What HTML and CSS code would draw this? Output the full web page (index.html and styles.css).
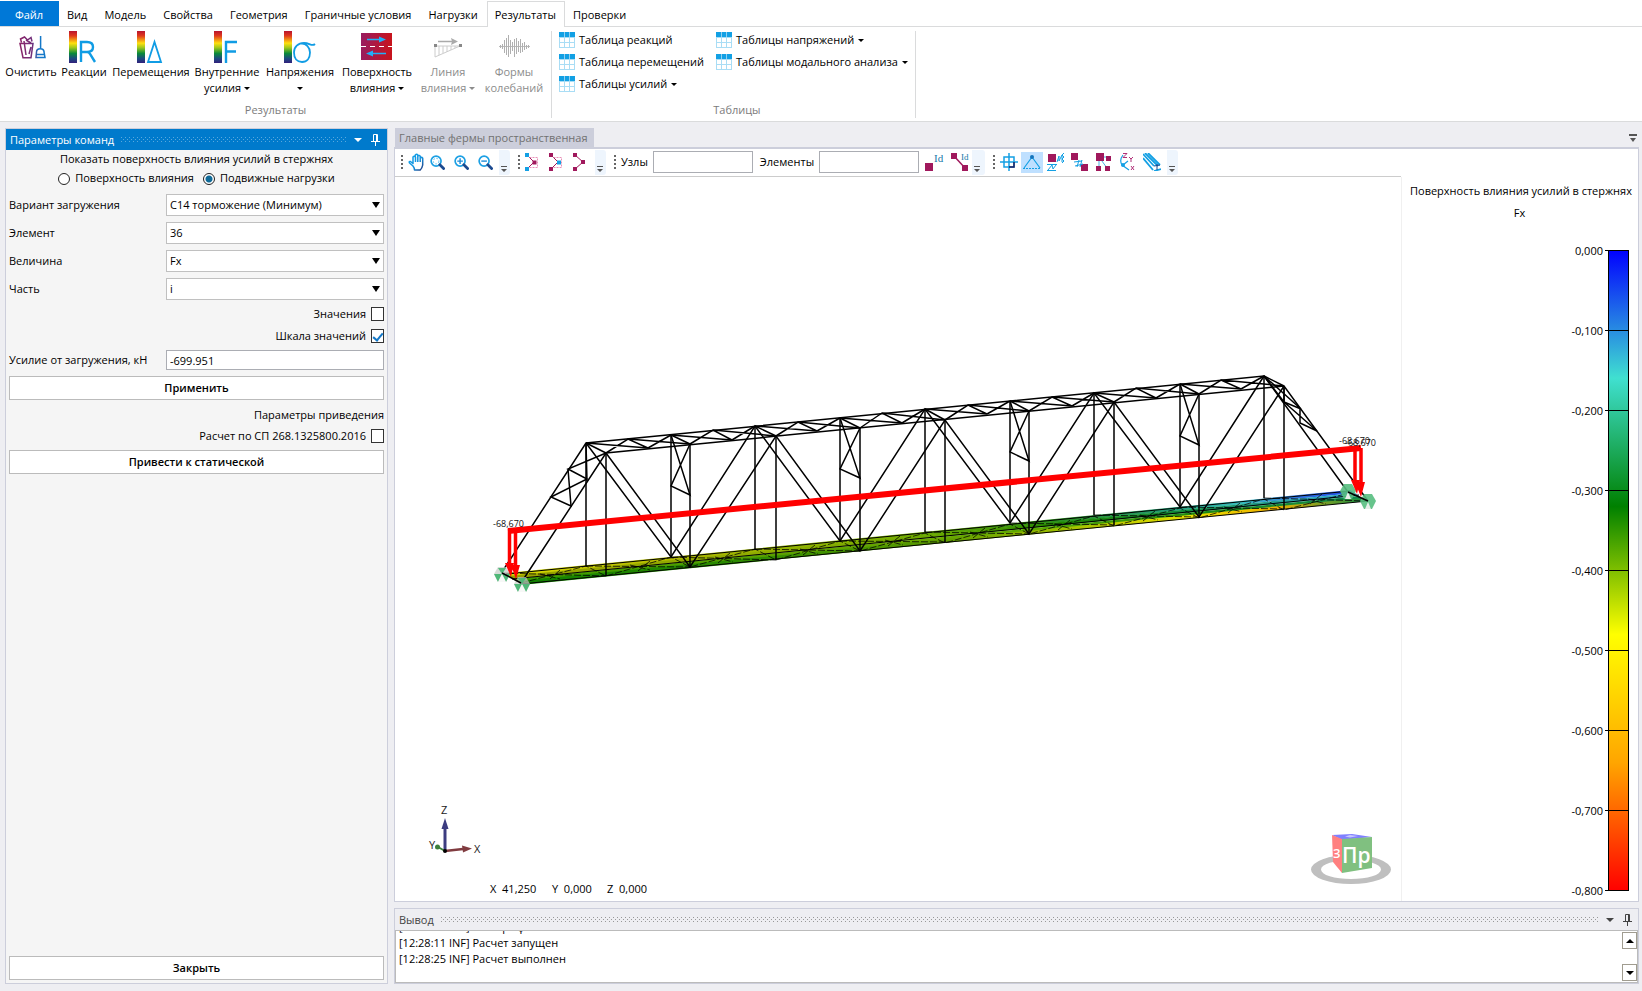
FILE: index.html
```html
<!DOCTYPE html>
<html lang="ru">
<head>
<meta charset="utf-8">
<title>Главные фермы пространственная</title>
<link rel="stylesheet" href="styles.css">
</head>
<body>
<svg class="defs" width="0" height="0" aria-hidden="true">
  <defs>
    <linearGradient id="spectrum" x1="0" y1="0" x2="0" y2="1">
      <stop offset="0" stop-color="#b81430"/><stop offset=".15" stop-color="#e03a1c"/><stop offset=".38" stop-color="#ffe010"/><stop offset=".52" stop-color="#a0c81c"/><stop offset=".7" stop-color="#0a8a3a"/><stop offset=".86" stop-color="#1c4a80"/><stop offset="1" stop-color="#32207c"/>
    </linearGradient>
    <linearGradient id="clean" gradientUnits="userSpaceOnUse" x1="5" y1="0" x2="30" y2="0">
      <stop offset="0" stop-color="#8a2468"/><stop offset=".5" stop-color="#70307c"/><stop offset=".75" stop-color="#1478c8"/>
    </linearGradient>
    <linearGradient id="surface" x1="0" y1="0" x2="1" y2="0">
      <stop offset="0" stop-color="#981c60"/><stop offset="1" stop-color="#c8141c"/>
    </linearGradient>
    <linearGradient id="blue" x1="0" y1="0" x2="1" y2="1">
      <stop offset="0" stop-color="#14a8ee"/><stop offset=".6" stop-color="#1490dc"/><stop offset="1" stop-color="#24387c"/>
    </linearGradient>
    <pattern id="dots-light" width="4" height="4" patternUnits="userSpaceOnUse"><path d="M0 0h1v1H0zM2 2h1v1H2z" fill="#59a8de"/></pattern>
    <pattern id="dots-dark" width="4" height="4" patternUnits="userSpaceOnUse"><path d="M0 0h1v1H0zM2 2h1v1H2z" fill="#999"/></pattern>
    <symbol id="table" viewBox="0 0 16 16">
      <path fill="#a9ddf5" d="M0 5h16v11H0z"/><path fill="#12a0e4" d="M0 0h16v5H0z"/>
      <path fill="#fff" d="M1 6h4v4H1zM6 6h4v4H6zM11 6h4v4h-4zM1 11h4v4H1zM6 11h4v4H6zM11 11h4v4h-4z"/>
      <path stroke="#8fd0f2" d="M5.500 0v5M10.500 0v5"/>
    </symbol>
    <symbol id="pin" viewBox="0 0 9 12"><path d="M2.500 7V.5h4V7M0 7.500h9M4.500 8v4M5.500 1v6" fill="none" stroke="currentColor"/></symbol>
    <symbol id="overflow" viewBox="0 0 8 6"><path d="M1 0h6v1H1zM1 3h6L4 6z" fill="#555"/></symbol>
    <symbol id="support-a" viewBox="0 0 16 15">
      <path d="M4 0h8l4 7-4 8H4L0 7z" fill="#c4ccc6" opacity=".7"/>
      <path d="M4 1h8L8 7zM0 7h8l-4 8zM8 7h8l-4 8z" fill="#4fb878"/><path d="m8 7 4 8H4z" fill="#fff" opacity=".8"/>
    </symbol>
    <symbol id="support-b" viewBox="0 0 16 15">
      <path d="M4 0h8l4 7-4 8H4L0 7z" fill="#57be80" opacity=".9"/>
      <path d="m8 8 3 7H5z" fill="#e8eeea"/>
    </symbol>
    <symbol id="lens" viewBox="0 0 16 16"><circle cx="6.500" cy="6.500" r="5.300" fill="none" stroke="#1ca0e4" stroke-width="1.800"/><path d="m10.500 10.500 4 4" stroke="#1c4a90" stroke-width="3" stroke-linecap="round"/></symbol>
  </defs>
</svg>

<header class="ribbon">
  <nav class="tabs">
    <button class="tab file">Файл</button><button class="tab">Вид</button><button class="tab">Модель</button><button class="tab">Свойства</button><button class="tab">Геометрия</button><button class="tab">Граничные условия</button><button class="tab">Нагрузки</button><button class="tab active">Результаты</button><button class="tab">Проверки</button>
  </nav>
  <div class="groups">
    <section class="group">
      <div class="commands">
        <button class="big c-clean"><svg width="32" height="32" viewBox="0 0 32 32" fill="none" stroke="url(#clean)" stroke-width="1.500"><path d="M5 12.500h13l-2 14.200H8zM6.500 11.500l-1-3.500 4-2 3 3 3.500-2.500 1 4M9 10l2 14M16 16l-2 7M11 9l5 3"/><path d="M25.600 5v12M21.500 21c0-4.500 7.500-4.500 7.500 0l1 5.500h-9zM21 23.500h9"/></svg><span>Очистить</span></button>
        <button class="big c-react"><svg width="32" height="32" viewBox="0 0 32 32"><path d="M1 0h8v32H1z" fill="url(#spectrum)"/><path d="M13 31V11h6q6 0 6 5t-6 5h-6m6 0q2 0 3 2l5 8" fill="none" stroke="#109ce4" stroke-width="2.400"/></svg><span>Реакции</span></button>
        <button class="big c-move"><svg width="32" height="32" viewBox="0 0 32 32"><path d="M2 0h8v32H2z" fill="url(#spectrum)"/><path d="M13 31 19.500 11 26 31z" fill="none" stroke="#109ce4" stroke-width="1.800"/></svg><span>Перемещения</span></button>
        <button class="big c-force"><svg width="32" height="32" viewBox="0 0 32 32"><path d="M3 0h8v32H3z" fill="url(#spectrum)"/><path d="M15 32V11h11M15 20.500h10" fill="none" stroke="#109ce4" stroke-width="2.400"/></svg><span>Внутренние<br>усилия <i class="caret"></i></span></button>
        <button class="big c-stress"><svg width="32" height="32" viewBox="0 0 32 32"><path d="M0 0h8v32H0z" fill="url(#spectrum)"/><path d="M31 13c-3 3-5-1-11-1-6 0-10 4-10 9.500 0 6 3 9.500 8 9.500s8-4 8-9.500c0-5-4-9-8-9" fill="none" stroke="#109ce4" stroke-width="1.800"/></svg><span>Напряжения<br><i class="caret"></i></span></button>
        <button class="big c-surf"><svg width="32" height="32" viewBox="0 0 32 32"><path d="M0 2h31v27H0z" fill="url(#surface)"/><path d="M0 15.500h31" stroke="#fff" stroke-dasharray="5 4"/><path d="M6 8.500h14M10 22.500h15" stroke="#20b0f8" stroke-width="1.500"/><path d="m18 5.500 7 3-7 3zM12 19.500l-7 3 7 3z" fill="#20b0f8"/></svg><span>Поверхность<br>влияния <i class="caret"></i></span></button>
        <button class="big c-line" disabled><svg width="32" height="32" viewBox="0 0 32 32" fill="none" stroke="#ccc"><path d="M3 15v11l25-11zM7 15v9M11 15v7M15 15v6M19 15v4M23 15v2"/><path d="M6 10.500h16" stroke="#aaa" stroke-width="1.500"/><path d="m19 7 7 3.500-7 3.500 1-3.500z" fill="#aaa" stroke="none"/><path d="M2 13h3v3H2zM27 13h3v3h-3z" fill="#888" stroke="none"/></svg><span>Линия<br>влияния <i class="caret"></i></span></button>
        <button class="big c-form" disabled><svg width="32" height="32" viewBox="0 0 32 32"><path d="M1 15.500h31" stroke="#bbb"/><path d="M2.500 14v3M4.500 13v5M6.500 9v13M8.500 7v17M10.500 4v22M12.500 9v14M14.500 11v9M16.500 8v18M18.500 7v16M20.500 10v11M22.500 8v14M24.500 12v9M26.500 11v8M28.500 14v4M30.500 14v3" stroke="#b0b0b0"/></svg><span>Формы<br>колебаний</span></button>
      </div>
      <div class="caption">Результаты</div>
    </section>
    <section class="group tables">
      <div class="links">
        <button><svg width="16" height="16"><use href="#table"/></svg>Таблица реакций</button>
        <button><svg width="16" height="16"><use href="#table"/></svg>Таблица перемещений</button>
        <button><svg width="16" height="16"><use href="#table"/></svg>Таблицы усилий <i class="caret"></i></button>
        <button><svg width="16" height="16"><use href="#table"/></svg>Таблицы напряжений <i class="caret"></i></button>
        <button><svg width="16" height="16"><use href="#table"/></svg>Таблицы модального анализа <i class="caret"></i></button>
      </div>
      <div class="caption">Таблицы</div>
    </section>
  </div>
</header>

<div class="workspace">
  <aside class="panel">
    <div class="panel-head"><h2>Параметры команд</h2><svg class="dots" height="5"><rect width="100%" height="5" fill="url(#dots-light)"/></svg><i class="caret wide"></i><svg width="9" height="12"><use href="#pin"/></svg></div>
    <form class="params">
      <div class="intro">Показать поверхность влияния усилий в стержнях</div>
      <div class="radios">
        <label><input type="radio" name="mode"><span>Поверхность влияния</span></label>
        <label><input type="radio" name="mode" checked><span>Подвижные нагрузки</span></label>
      </div>
      <div class="field"><label for="f1">Вариант загружения</label><div class="combo"><select id="f1"><option>C14 торможение (Минимум)</option></select></div></div>
      <div class="field"><label for="f2">Элемент</label><div class="combo"><select id="f2"><option>36</option></select></div></div>
      <div class="field"><label for="f3">Величина</label><div class="combo"><select id="f3"><option>Fx</option></select></div></div>
      <div class="field"><label for="f4">Часть</label><div class="combo"><select id="f4"><option>i</option></select></div></div>
      <label class="check"><span>Значения</span><input type="checkbox"></label>
      <label class="check"><span>Шкала значений</span><input type="checkbox" checked></label>
      <div class="field force"><label for="f5">Усилие от загружения, кН</label><input id="f5" type="text" value="-699.951"></div>
      <button type="button" class="action">Применить</button>
      <div class="right">Параметры приведения</div>
      <label class="check last"><span>Расчет по СП 268.1325800.2016</span><input type="checkbox"></label>
      <button type="button" class="action second">Привести к статической</button>
      <button type="button" class="action close">Закрыть</button>
    </form>
  </aside>

  <main class="main">
    <div class="doc-tabs"><button class="doc-tab">Главные фермы пространственная</button><svg class="doc-menu" width="8" height="8"><path d="M0 0h8v2H0zM1 4h6L4 8z" fill="#555"/></svg></div>
    <section class="document">
      <div class="view">
        <div class="toolbar">
          <i class="grip"></i>
          <button class="tool" aria-label="Сдвиг"><svg width="18" height="18" viewBox="0 0 18 18" fill="#fff" stroke="url(#blue)" stroke-width="1.500" stroke-linejoin="round"><path d="M5 13 1.500 10q-1-2 1-1.500L5 10.500V4q1.200-1.500 2.300 0V2q1.400-1.500 2.500 0v1q1.400-1.300 2.500.3v1.500q1.400-1 2.400.4V12q-.5 3-2.500 5H6.500q0-2-1.500-4zM7.500 4v5M9.800 3v6M12.200 4v5"/></svg></button>
          <button class="tool g4" aria-label="Показать всё"><svg width="15" height="15" viewBox="0 0 16 16"><use href="#lens" width="16" height="16"/><circle cx="6.500" cy="6.500" r="3" fill="none" stroke="#5cc0ee" stroke-dasharray="2 1.500"/></svg></button>
          <button class="tool g9" aria-label="Увеличить"><svg width="15" height="15" viewBox="0 0 16 16"><use href="#lens" width="16" height="16"/><path d="M3.500 6.500h6M6.500 3.500v6" stroke="#1c8cd8" stroke-width="1.500"/></svg></button>
          <button class="tool g9" aria-label="Уменьшить"><svg width="15" height="15" viewBox="0 0 16 16"><use href="#lens" width="16" height="16"/><path d="M3.500 6.500h6" stroke="#1c8cd8" stroke-width="1.500"/></svg></button>
          <span class="over"><svg width="8" height="6"><use href="#overflow"/></svg></span>
          <i class="grip"></i>
          <button class="tool" aria-label="Выбор узлов"><svg width="16" height="18" viewBox="0 0 16 18"><path d="M2 2l7 7-7 7" fill="none" stroke="#a0185c"/><path d="M4.500 4.500h8v10h-8" fill="none" stroke="#e890b8" stroke-dasharray="2 1"/><path d="M0 0h4v4H0zM0 14h4v4H0z" fill="#14a0e4"/><path d="M7.500 7.500h4v4h-4z" fill="#a0185c"/></svg></button>
          <button class="tool g8" aria-label="Выбор элементов"><svg width="16" height="18" viewBox="0 0 16 18"><path d="M2 2l7 7-7 7" fill="none" stroke="#a0185c"/><path d="M4.500 4.500h8v10h-8" fill="none" stroke="#e890b8" stroke-dasharray="2 1"/><path d="M0 0h4v4H0zM0 14h4v4H0z" fill="#a0185c"/><path d="M8 7.500h4v4H8z" fill="#14a0e4"/></svg></button>
          <button class="tool g8" aria-label="Снять выбор"><svg width="16" height="18" viewBox="0 0 16 18"><path d="M2 2l8 7-8 7" fill="none" stroke="#a0185c"/><path d="M0 0h4v4H0zM0 14h4v4H0zM8 7h4v4H8z" fill="#a0185c"/></svg></button>
          <span class="over"><svg width="8" height="6"><use href="#overflow"/></svg></span>
          <i class="grip"></i>
          <label class="find">Узлы<input type="text"></label>
          <label class="find second">Элементы<input type="text"></label>
          <button class="tool" aria-label="Номера узлов"><svg width="20" height="18" viewBox="0 0 20 18"><path d="M0 10h8v8H0z" fill="#a0185c"/><text x="9" y="9" class="id">Id</text></svg></button>
          <button class="tool g6" aria-label="Номера элементов"><svg width="18" height="18" viewBox="0 0 18 18"><path d="m3 3 11 12" stroke="#a0185c" stroke-width="1.500"/><path d="M0 0h6v6H0zM11 12h6v6h-6z" fill="#a0185c"/><text x="10" y="7" class="id small">Id</text></svg></button>
          <span class="over tight"><svg width="8" height="6"><use href="#overflow"/></svg></span>
          <i class="grip"></i>
          <button class="tool" aria-label="Узлы"><svg width="18" height="18" viewBox="0 0 18 18"><path d="M9 0v18M0 9h18M4 4h10v10H4z" fill="none" stroke="#14a0e4" stroke-width="1.500"/><path d="M14 9v5H9" fill="none" stroke="#202060" stroke-width="1.500"/></svg></button>
          <button class="tool on" aria-label="Опоры"><svg width="18" height="18" viewBox="0 0 18 18"><path d="M9 4 1 15M9 4l8 11" stroke="#14a0e4" stroke-width="1.200"/><path d="M0 15.500h18" stroke="#14a0e4" stroke-dasharray="2 1"/><circle cx="9" cy="4" r="2" fill="#1474bc"/></svg></button>
          <button class="tool" aria-label="Связи"><svg width="18" height="18" viewBox="0 0 18 18"><path d="M1 1h8v8H1z" fill="#a0185c"/><path d="M10 9l2-6v5l3-6v7M17 0l-2 2 2 2-2 2 2 2-2 2M0 11.500h10M1 17l4-5 1 4 3-4M0 17.500h9" fill="none" stroke="#14a0e4"/></svg></button>
          <button class="tool g6" aria-label="Стержни"><svg width="18" height="18" viewBox="0 0 18 18"><path d="M0 0h7v7H0zM10 11h7v7h-7z" fill="#a0185c"/><path d="M3 9l8-1M4 13l8-2M8 7l-2 7M11 7l-2 7" stroke="#14a0e4"/></svg></button>
          <button class="tool g6" aria-label="Группы"><svg width="18" height="18" viewBox="0 0 18 18"><path d="M4 4h8M4 4v10M4 4l8 11" stroke="#4ab0e4"/><path d="M1 0h8v8H1zM11 3h5v5h-5zM1 13h5v5H1zM10 13h5v5h-5z" fill="#a0185c"/></svg></button>
          <button class="tool g6" aria-label="Оси"><svg width="18" height="18" viewBox="0 0 18 18"><path d="M4 2q-4 5-1 10l7 5M4 12l5-4" fill="none" stroke="#14a0e4" stroke-width="1.200"/><circle cx="4" cy="12" r="2" fill="#14a0e4"/><path d="M4 .5h4l-4 4h4M10 4l2 2 2-2M12 6v3M12 13l3 4M15 13l-3 4" fill="none" stroke="#b03078"/></svg></button>
          <button class="tool g6" aria-label="Сечения"><svg width="18" height="18" viewBox="0 0 18 18"><path d="m0 1 11 12M2 0l13 13M0 5l10 12M5 0l12 12M11 18l7-2" stroke="#14a0e4" stroke-width="1.800"/><path d="M14 11v6M11 13l6-1" stroke="#1c4a90"/></svg></button>
          <span class="over"><svg width="8" height="6"><use href="#overflow"/></svg></span>
        </div>

        <svg class="scene" viewBox="395 178 1006 724" preserveAspectRatio="xMidYMin meet">
          <defs>
            <linearGradient id="d1" gradientUnits="userSpaceOnUse" x1="510" y1="0" x2="1360" y2="0"><stop offset="0" stop-color="#d8d800"/><stop offset=".2" stop-color="#b0b800"/><stop offset=".45" stop-color="#7ab000"/><stop offset=".62" stop-color="#2f9010"/><stop offset=".78" stop-color="#229c78"/><stop offset=".86" stop-color="#38c0c0"/><stop offset=".93" stop-color="#2f70e0"/><stop offset="1" stop-color="#1a40e8"/></linearGradient>
            <linearGradient id="d2" gradientUnits="userSpaceOnUse" x1="510" y1="0" x2="1360" y2="0"><stop offset="0" stop-color="#98a000"/><stop offset=".3" stop-color="#90ac00"/><stop offset=".5" stop-color="#6aa800"/><stop offset=".65" stop-color="#1f8800"/><stop offset=".8" stop-color="#108a40"/><stop offset=".95" stop-color="#30a8c0"/></linearGradient>
            <linearGradient id="d3" gradientUnits="userSpaceOnUse" x1="510" y1="0" x2="1360" y2="0"><stop offset="0" stop-color="#3a9a00"/><stop offset=".3" stop-color="#5aa000"/><stop offset=".5" stop-color="#6aa800"/><stop offset=".62" stop-color="#5aa800"/><stop offset=".8" stop-color="#1f8a10"/><stop offset="1" stop-color="#108a50"/></linearGradient>
            <linearGradient id="d4" gradientUnits="userSpaceOnUse" x1="510" y1="0" x2="1360" y2="0"><stop offset="0" stop-color="#108000"/><stop offset=".25" stop-color="#2a8a00"/><stop offset=".5" stop-color="#5a9a00"/><stop offset=".65" stop-color="#a0c000"/><stop offset=".8" stop-color="#e8e000"/><stop offset=".9" stop-color="#f0b000"/><stop offset="1" stop-color="#209040"/></linearGradient>
          </defs>
          <g class="deck">
            <path d="M506 574 1350 491l5 3L509 578z" fill="url(#d1)"/>
            <path d="M509 577 1355 494l4 3L513 580z" fill="url(#d2)"/>
            <path d="M513 580 1359 497l4 3L517 583z" fill="url(#d3)"/>
            <path d="M517 582 1363 499l5 3L521 586z" fill="url(#d4)"/>
          </g>
          <path class="ribs" d="M506 575 1350 492M521 585 1368 502M512 580 1359 496"/>
          <path class="braces" d="M521 584l65-17 20 10 65-19 19 10 65-18 21 11 64-19 20 10 65-18 20 10 65-19 19 10 65-18 20 10 66-18 19 10 65-19 20 11 65-17M502 574l104 3M586 567l104 1M671 558l105 3M755 550l105 2M840 542l105 1M925 533l104 2M1010 524l104 2M1094 516l105 2M1180 508l104 2M1264 499l104 3M540 575l20 5M560 571l-10 9M630 566l20 5M650 562l-12 10M715 558l18 5M730 554l-12 10M800 550l18 5M815 546l-12 10M885 541l18 5M900 537l-12 10M970 533l18 5M985 529l-12 10M1054 525l18 5M1070 521l-12 10M1140 516l18 5M1155 512l-12 10M1224 508l18 5M1240 504l-12 10M1308 500l18 5M1322 495l-12 10"/>
          <g class="truss">
            <path d="M502 573 586 444 1264 377 1348 493M521 584 606 454 1284 387 1368 502"/>
            <path d="M586 444V567M671 436V558M755 427V550M840 419V542M925 410V533M1010 402V524M1094 394V516M1180 385V508M1264 377V499"/>
            <path d="M606 454V577M690 445V568M776 437V561M860 429V552M945 421V543M1029 412V535M1114 403V526M1199 395V518M1284 387V510"/>
            <path d="M586 444 671 558 755 427 840 542 925 410 1010 524 1094 394 1180 508 1264 377"/>
            <path d="M606 454 690 568 776 437 860 552 945 421 1029 535 1114 403 1199 518 1284 387"/>
            <path d="M586 444l20 10M671 436l19 9M755 427l21 10M840 419l20 10M925 410l20 11M1010 402l19 10M1094 394l20 9M1180 385l19 10M1264 377l20 10"/>
            <path d="M586 444 648 449 628 440 606 454M648 449 671 436M628 440 690 445M671 436 732 441 713 431 690 445M732 441 755 427M713 431 776 437M755 427 817 432 798 423 776 437M817 432 840 419M798 423 860 429M840 419 902 424 882 414 860 429M902 424 925 410M882 414 945 421M925 410 987 415 968 406 945 421M987 415 1010 402M968 406 1029 412M1010 402 1072 407 1052 398 1029 412M1072 407 1094 394M1052 398 1114 403M1094 394 1156 399 1136 389 1114 403M1156 399 1180 385M1136 389 1199 395M1180 385 1241 390 1221 381 1199 395M1241 390 1264 377M1221 381 1284 387"/>
            <path d="M671 436 690 496 671 487 690 445M840 419 860 479 840 470 860 429M1010 402 1029 462 1010 453 1029 412M1180 385 1199 446 1180 437 1199 395"/>
            <path d="M606 454 568 470 587 480 551 498 571 507 568 470M586 444 587 482M1264 377 1301 410 1284 403 1284 387M1300 410 1300 424 1317 432 1284 403M1264 377 1284 403"/>
          </g>
          <use href="#support-a" x="494" y="568" width="16" height="15"/><use href="#support-a" x="514" y="578" width="16" height="15"/>
          <use href="#support-b" x="1340" y="485" width="16" height="15"/><use href="#support-b" x="1360" y="495" width="16" height="15"/>
          <path d="m502 574 19 10M1348 493l20 9" stroke="#000" stroke-width="1.500"/>
          <g class="load">
            <path d="M508 532 1361 449" stroke-width="6"/>
            <path d="M509.500 530v38M515.500 533v38M1355 450v36M1361 449v38" stroke-width="3.500"/>
            <path d="M505 564h9l-3 14zM511 566h9l-4 14zM1351 481h9l-3 14zM1355 483h10l-4 15z" stroke="none" fill="#f00"/>
          </g>
          <g class="tags"><text x="493" y="528">-68,670</text><text x="1339" y="445">-68,670</text><text x="1345" y="447">-68,670</text></g>
          <g class="axes">
            <path d="M445 852V829" stroke="#3c3c80" stroke-width="3"/><path d="m441.500 830 3.500-11 3.500 11z" fill="#3c3c80"/>
            <path d="m445 852 18-2" stroke="#803c40" stroke-width="2.500"/><path d="m462 846.500 10 3-9 4z" fill="#803c40"/>
            <path d="m445 852-7-4" stroke="#3c803c" stroke-width="2"/><circle cx="437.500" cy="848" r="2.500" fill="#3c803c"/><circle cx="445" cy="852" r="2"/>
            <text x="441" y="815">Z</text><text x="429" y="850">Y</text><text x="474" y="854">X</text>
          </g>
          <g class="cube">
            <path fill="#bfbfbf" fill-rule="evenodd" d="M1311 870.500a40 14.500 0 0 1 80 0a40 14.500 0 0 1-80 0zM1321 870.500a30 9.500 0 0 0 60 0a30 9.500 0 0 0-60 0z"/>
            <path d="m1332 836 20-1 20 3-30 3z" fill="#8080ff"/><path d="m1332 836 10 4v34l-9-11z" fill="#ff8080"/><path d="m1342 840 30-2v31l-30 5z" fill="#80c080"/>
            <path d="m1345 837.500 5-1.500 8 1-8 1.500z" fill="#c8c8ff"/>
            <text x="1333" y="859" class="side">З</text><text x="1342" y="864" class="front">Пр</text>
          </g>
          <g class="coords"><text x="490" y="894">X&#160; 41,250</text><text x="552" y="894">Y&#160; 0,000</text><text x="607" y="894">Z&#160; 0,000</text></g>
        </svg>
      </div>
      <div class="legend">
        <h3>Поверхность влияния усилий в стержнях</h3>
        <div class="unit">Fx</div>
        <div class="scale">
          <ol><li>0,000</li><li>-0,100</li><li>-0,200</li><li>-0,300</li><li>-0,400</li><li>-0,500</li><li>-0,600</li><li>-0,700</li><li>-0,800</li></ol>
          <div class="bar"><i></i><i></i><i></i><i></i><i></i><i></i><i></i><i></i><i></i></div>
        </div>
      </div>
    </section>

    <section class="output">
      <div class="output-head"><h2>Вывод</h2><svg class="dots" height="5"><rect width="100%" height="5" fill="url(#dots-dark)"/></svg><i class="caret wide"></i><svg width="9" height="12"><use href="#pin"/></svg></div>
      <div class="log">
        <div class="lines"><p>[12:28:11 INF] Импорт файлов</p><p>[12:28:11 INF] Расчет запущен</p><p>[12:28:25 INF] Расчет выполнен</p></div>
        <div class="scroll"><button aria-label="Вверх"><i class="caret wide up"></i></button><button aria-label="Вниз"><i class="caret wide"></i></button></div>
      </div>
    </section>
  </main>
</div>
</body>
</html>
```
FILE: styles.css
```css
* { box-sizing: border-box; }
html, body { height: 100%; }
body {
  margin: 0;
  display: flex;
  flex-direction: column;
  background: #eeeef2;
  color: #000;
  font: 11px/16px "Open Sans", "Noto Sans", sans-serif;
  overflow: hidden;
}
button, input, select { font: inherit; color: inherit; margin: 0; }
button { border: 0; padding: 0; background: none; white-space: nowrap; }
h2, h3, p, ol { margin: 0; padding: 0; font: inherit; list-style: none; }
svg { display: block; flex: none; }
.defs { position: absolute; }

.caret {
  display: inline-block;
  border: solid transparent;
  border-width: 3px 3px 0;
  border-top-color: currentColor;
  vertical-align: 2px;
}
.caret.wide { border-width: 4px 4px 0; border-top-color: currentColor; }
.caret.up { transform: rotate(180deg); }

/* Ribbon */
.ribbon { background: #fff; border-bottom: 1px solid #dadbdc; }
.tabs { display: flex; height: 27px; padding-top: 1px; border-bottom: 1px solid #dadbdc; }
.tab { padding: 2px 9px 0 8px; height: 26px; }
.tab.file { width: 59px; height: 25px; background: #0078d7; color: #fff; }
.tab.active { border: 1px solid #dadbdc; border-bottom: 0; background: #fff; padding: 1px 8px 0 7px; }
.groups { display: flex; height: 94px; padding: 4px 0 3px; }
.group { display: flex; flex-direction: column; justify-content: space-between; border-right: 1px solid #dadbdc; }
.commands { display: flex; padding: 0 4px 0 3px; }
.big { display: flex; flex-direction: column; align-items: center; gap: 1px; }
.big:disabled { color: #8c8c8c; }
.c-clean { width: 56px; }
.c-react { width: 50px; }
.c-move { width: 84px; }
.c-force { width: 68px; }
.c-stress { width: 78px; }
.c-surf { width: 76px; }
.c-line { width: 66px; }
.c-form { width: 66px; }
.caption { color: #7c7c7c; text-align: center; }
.tables { padding-left: 7px; }
.links {
  display: grid;
  grid-template-rows: repeat(3, 16px);
  grid-auto-flow: column;
  justify-content: start;
  gap: 6px 12px;
  padding: 1px 7px 0 0;
}
.links button { display: flex; align-items: center; gap: 4px; }

/* Docked areas */
.workspace { flex: 1; min-height: 0; display: flex; gap: 6px; padding: 6px 3px 7px 5px; }
.panel { width: 383px; flex: none; display: flex; flex-direction: column; border: 1px solid #cccedb; background: #f5f5f5; }
.panel-head, .output-head { display: flex; align-items: center; gap: 7px; height: 21px; flex: none; padding: 0 7px 0 4px; }
.panel-head { background: #007acc; color: #fff; }
.output-head { padding-right: 6px; }
.dots { flex: 1; width: 0; min-width: 0; }
.panel-head svg:last-child, .output-head svg:last-child { margin-left: 2px; }
.params { flex: 1; display: flex; flex-direction: column; padding: 1px 3px 3px; }
.intro { text-align: center; }
.radios { display: flex; justify-content: center; gap: 9px; height: 24px; }
.radios label { display: flex; align-items: flex-start; gap: 5px; padding-top: 3px; }
.radios input {
  appearance: none;
  width: 12px;
  height: 12px;
  margin-top: 3px;
  border: 1px solid #222;
  border-radius: 50%;
  background: #fff;
}
.radios input:checked { background: radial-gradient(circle, #106a98 3px, #fff 4px); }
.field { display: grid; grid-template-columns: 157px 1fr; align-items: center; margin-top: 6px; }
.field:nth-of-type(3) { margin-top: 3px; }
.combo { position: relative; }
.combo::after {
  content: "";
  position: absolute;
  right: 4px;
  top: 8px;
  border: solid transparent;
  border-width: 6px 4px 0;
  border-top-color: #000;
}
.combo select {
  appearance: none;
  display: block;
  width: 100%;
  height: 22px;
  padding: 0 3px;
  border: 1px solid #c0c0c0;
  border-radius: 0;
  background: #fff;
}
.field input { height: 20px; width: 100%; padding: 0 3px; border: 1px solid #abadb3; }
.check { display: flex; justify-content: flex-end; align-items: center; gap: 5px; height: 22px; }
.field + .check { margin-top: 3px; }
.check input { appearance: none; width: 13px; height: 14px; border: 1px solid #333; background: #fff; display: grid; place-items: center; }
.check input:checked::before {
  content: "";
  width: 4px;
  height: 8px;
  border: solid #1478c8;
  border-width: 0 2px 2px 0;
  transform: rotate(40deg);
}
.field.force { margin-top: 3px; }
.action { height: 24px; flex: none; border: 1px solid #bbb; background: #fff; font-weight: 600; margin-top: 6px; }
.action.second { margin-top: 3px; }
.right { text-align: right; margin-top: 7px; }
.check.last { margin-top: 2px; }
.action.close { margin-top: auto; }

.main { flex: 1; min-width: 0; display: flex; flex-direction: column; }
.doc-tabs { display: flex; align-items: center; justify-content: space-between; height: 21px; border-bottom: 2px solid #cccedb; padding-right: 2px; }
.doc-tab { height: 19px; padding: 0 6px 0 4px; margin-left: 1px; background: #cccedb; color: #717171; }
.document { flex: 1; min-height: 0; display: flex; background: #fff; border: 1px solid #cccedb; border-top: 0; }
.view { flex: 1; min-width: 0; display: flex; flex-direction: column; }
.toolbar { display: flex; align-items: center; height: 28px; flex: none; border-bottom: 1px solid #ccc; padding: 0 0 1px 6px; }
.grip { width: 2px; height: 14px; margin-right: 5px; background: repeating-linear-gradient(#666 0 2px, transparent 2px 4px); }
.tool { height: 21px; display: grid; place-items: center; }
.g4 { margin-left: 4px; }
.g6 { margin-left: 6px; }
.g8 { margin-left: 8px; }
.g9 { margin-left: 9px; }
.tool.on { width: 22px; background: #bfe0ff; margin: 0 4px 0 3px; }
.over { align-self: stretch; width: 11px; margin: 1px 8px 0 6px; padding-left: 1px; display: flex; align-items: flex-end; background: #eef5fd; border-radius: 0 3px 3px 0; }
.over.tight { width: 13px; margin-left: 3px; }
.over svg { margin-bottom: 3px; }
.find { display: flex; align-items: center; gap: 5px; }
.find.second { margin: 0 6px 0 7px; }
.find input { width: 100px; height: 22px; border: 1px solid #abadb3; }
.id { font: 11px "Liberation Serif", serif; fill: #1478a8; }
.id.small { font-size: 9px; }

.scene { flex: 1; min-height: 0; width: 100%; }
.ribs, .braces, .truss path { fill: none; stroke: #000; }
.ribs { stroke-width: 1; }
.braces { stroke-width: 1; stroke-dasharray: 7 2; opacity: .75; }
.truss path { stroke-width: 1.5; }
.load { stroke: #f00; fill: none; }
.tags { font-size: 9px; fill: #111; }
.axes text { font-size: 11px; fill: #222; }
.cube .side { font-size: 12px; font-weight: 600; fill: #fff; }
.cube .front { font-size: 21px; font-weight: 600; fill: #fff; }

.legend { width: 237px; flex: none; display: flex; flex-direction: column; border-left: 1px solid #f0f0f0; margin-top: 28px; padding: 6px 9px 10px 8px; text-align: center; white-space: nowrap; }
.unit { margin-top: 6px; }
.scale { flex: 1; display: flex; justify-content: flex-end; margin-top: 29px; }
.scale ol { display: flex; flex-direction: column; justify-content: space-between; margin: -7px 2px -8px 0; text-align: right; }
.bar {
  width: 24px;
  display: flex;
  flex-direction: column;
  justify-content: space-between;
  background: linear-gradient(#00f, #40e0d0 20%, #008000 40%, #ff0 60%, #ffa500 80%, #f00) 3px 0 / 21px 100% no-repeat;
  position: relative;
}
.bar::before { content: ""; position: absolute; inset: 0 0 0 3px; border: solid #000; border-width: 0 1px; }
.bar i { height: 1px; background: #000; }

.output { height: 76px; flex: none; margin-top: 6px; display: flex; flex-direction: column; border: 1px solid #cccedb; color: #444; }
.log { flex: 1; min-height: 0; display: flex; justify-content: space-between; background: #fff; border: 1px solid #bbb; color: #000; overflow: hidden; }
.lines { padding-left: 3px; margin-top: -12px; }
.scroll { display: flex; flex-direction: column; justify-content: space-between; padding: 1px 0 1px 1px; }
.scroll button { width: 15px; height: 17px; border: 1px solid #a09c90; display: grid; place-items: center; }
```
